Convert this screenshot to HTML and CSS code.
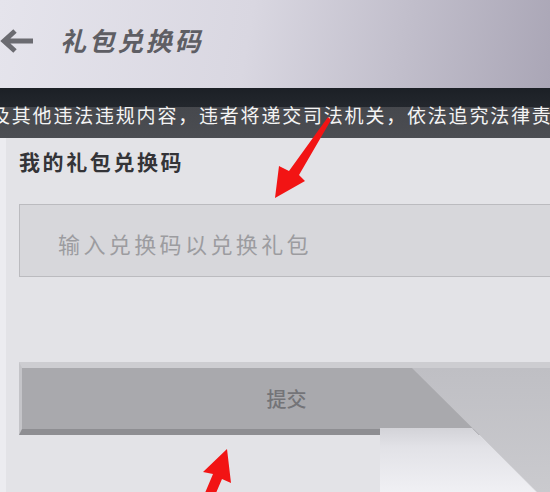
FILE: index.html
```html
<!DOCTYPE html>
<html lang="zh-CN">
<head>
  <meta charset="UTF-8">
  <title>礼包兑换码</title>
  <link rel="stylesheet" href="styles.css">
</head>
<body>
  <div class="screen">
    <header class="topbar">
      <svg class="back" width="34" height="26" viewBox="0 0 34 26">
        <path d="M15 3 L4 13 L15 23 M4 13 H33" fill="none" stroke="#6b6b71" stroke-width="5" stroke-linejoin="miter"/>
      </svg>
      <h1 class="title">礼包兑换码</h1>
    </header>

    <div class="notice">及其他违法违规内容，违者将递交司法机关，依法追究法律责</div>

    <main class="panel">
      <label class="label" for="code">我的礼包兑换码</label>
      <input class="code-input" type="text" id="code" placeholder="输入兑换码以兑换礼包">
      <button class="submit">提交</button>
    </main>

    <!-- screen glare + red arrows drawn over the capture -->
    <svg class="overlay" width="550" height="492" viewBox="0 0 550 492">
      <defs>
        <linearGradient id="glareA" x1="0" y1="0" x2="0" y2="1">
          <stop offset="0" stop-color="#bfbfc4"/>
          <stop offset="1" stop-color="#cacace"/>
        </linearGradient>
        <linearGradient id="glareB" x1="0" y1="0" x2="0" y2="1">
          <stop offset="0" stop-color="#d3d3d8"/>
          <stop offset="0.3" stop-color="#e2e2e7"/>
          <stop offset="1" stop-color="#f0f0f4"/>
        </linearGradient>
      </defs>
      <polygon points="412,368 551,368 551,492 537,492" fill="url(#glareA)"/>
      <polygon points="380,428 472,428 536,492 380,492" fill="url(#glareB)"/>
      <polygon points="328,117 331,120 299,175 305,181 275,198 279,166 289,171" fill="#f21414"/>
      <polygon points="227,449 231,483 222,479 216,493 205,493 213,474 203,472" fill="#f21414"/>
    </svg>
  </div>
</body>
</html>
```

FILE: styles.css
```css
body {
  margin: 0;
  font-family: "Noto Sans CJK SC", "Noto Sans", sans-serif;
  background: #e4e4e8;
}
.screen {
  position: relative;
  width: 550px;
  height: 492px;
  overflow: hidden;
}
.topbar {
  height: 88px;
  box-sizing: border-box;
  display: flex;
  align-items: flex-start;
  padding-top: 25px;
  background: linear-gradient(100deg, #e5e4ec 0%, #d9d7e1 45%, #aaa6b6 100%);
}
.back {
  margin-top: 3px;
  flex: none;
}
.title {
  margin: 0 0 0 26px;
  font-size: 26px;
  line-height: 30px;
  font-weight: bold;
  font-style: italic;
  letter-spacing: 2.6px;
  color: #5e5e64;
}
.notice {
  height: 50px;
  box-sizing: border-box;
  padding-top: 16px;
  margin-left: -9px;
  white-space: nowrap;
  font-size: 19px;
  line-height: 22px;
  letter-spacing: 1.8px;
  color: #f4f4f4;
  background: linear-gradient(#1c2026 0, #23272d 19px, #46484d 19px, #4b4d52 100%);
}
.panel {
  height: 354px;
  box-sizing: border-box;
  padding: 11px 0 0 13px;
  border-left: 6px solid #ececf0;
  background: #e3e3e7;
  display: flex;
  flex-direction: column;
}
.label {
  font-size: 21px;
  line-height: 24px;
  font-weight: bold;
  letter-spacing: 2.6px;
  color: #343438;
}
.code-input {
  margin-top: 31px;
  width: 532px;
  height: 73px;
  box-sizing: border-box;
  padding: 4px 0 0 38px;
  border: 1px solid #bbbbbf;
  background: #d7d7db;
  font-family: inherit;
  font-size: 22px;
  letter-spacing: 3.4px;
  outline: none;
}
.code-input::placeholder {
  color: #9c9ca0;
}
.submit {
  margin-top: 85px;
  width: 532px;
  height: 73px;
  box-sizing: border-box;
  border: none;
  border-top: 6px solid #cdcdd1;
  border-left: 3px solid #c4c4c8;
  border-bottom: 6px solid #8e8e92;
  background: #a9a9ad;
  font-family: inherit;
  font-size: 20px;
  font-weight: 500;
  color: #747478;
  padding: 0;
}
.overlay {
  position: absolute;
  left: 0;
  top: 0;
  pointer-events: none;
}
```
